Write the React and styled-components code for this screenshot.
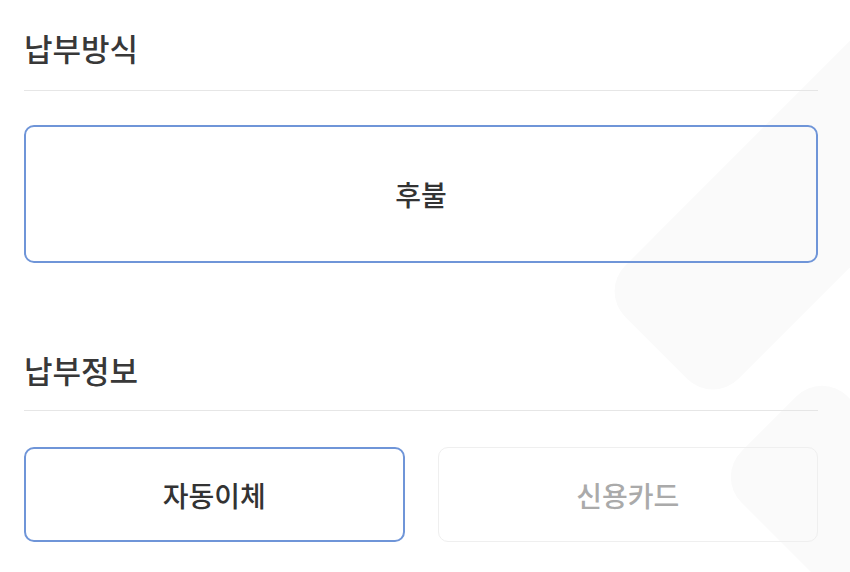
import styled, { createGlobalStyle } from "styled-components";

const GlobalStyle = createGlobalStyle`
  html, body {
    margin: 0;
    padding: 0;
    background: #fff;
  }
  body {
    font-family: "Noto Sans CJK KR", "Noto Sans", sans-serif;
    color: #333;
  }
`;

const Page = styled.div`
  position: relative;
  width: 850px;
  height: 572px;
  overflow: hidden;
  padding: 0 32px 0 24px;
  box-sizing: border-box;
`;

// faint watermark bands in the background
const Mark = styled.div`
  position: absolute;
  width: ${(p) => p.w}px;
  height: ${(p) => p.h}px;
  left: ${(p) => p.x}px;
  top: ${(p) => p.y}px;
  border-radius: 36px;
  background: #fafafa;
  transform: rotate(${(p) => p.deg}deg);
  z-index: 0;
`;

const Content = styled.div`
  position: relative;
  z-index: 1;
`;

const Section = styled.section`
  margin-top: ${(p) => p.top}px;
`;

const Header = styled.div`
  padding-bottom: ${(p) => p.bottom}px;
  border-bottom: 1.5px solid #e6e6e6;
`;

const Title = styled.h2`
  margin: 0;
  font-size: 31px;
  line-height: 36px;
  font-weight: 500;
  color: #383838;
`;

const Options = styled.div`
  display: grid;
  grid-template-columns: ${(p) => (p.cols === 2 ? "1fr 1fr" : "1fr")};
  gap: 33px;
  margin-top: ${(p) => p.gap}px;
`;

const Option = styled.div`
  height: ${(p) => p.h}px;
  box-sizing: border-box;
  border: ${(p) => (p.active ? "2.5px solid #6f95d8" : "1.5px solid #efefef")};
  border-radius: 10px;
  display: flex;
  align-items: center;
  justify-content: center;
  font-size: 28px;
  font-weight: 500;
  color: ${(p) => (p.active ? "#333" : "#aaaaaa")};
`;

export default function App() {
  return (
    <>
      <GlobalStyle />
      <Page>
        <Mark x={753} y={-79} w={160} h={500} deg={45} />
        <Mark x={800} y={380} w={150} h={300} deg={-45} />
        <Content>
          <Section top={30}>
            <Header bottom={24}>
              <Title>납부방식</Title>
            </Header>
            <Options gap={34}>
              <Option active h={138}>후불</Option>
            </Options>
          </Section>
          <Section top={89}>
            <Header bottom={22}>
              <Title>납부정보</Title>
            </Header>
            <Options cols={2} gap={36}>
              <Option active h={95}>자동이체</Option>
              <Option h={95}>신용카드</Option>
            </Options>
          </Section>
        </Content>
      </Page>
    </>
  );
}
